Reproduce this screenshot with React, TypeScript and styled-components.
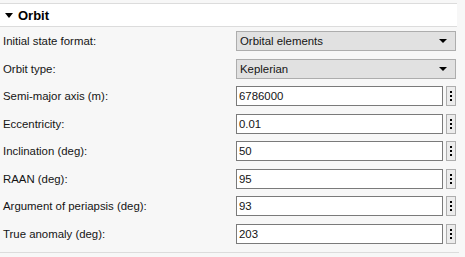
import React from "react";
import styled, { createGlobalStyle } from "styled-components";

const Global = createGlobalStyle`
  html, body { margin: 0; padding: 0; background: #f7f7f7; }
  body { font-family: "Liberation Sans", Arial, sans-serif; color: #141414; }
`;

const Page = styled.div`
  width: 457px;
  padding-top: 3px;
`;

const Header = styled.div`
  height: 22px;
  background: #ffffff;
  border-top: 1px solid #dcdcdc;
  border-bottom: 1px solid #dcdcdc;
  display: flex;
  align-items: center;
  padding-left: 5px;
  gap: 5px;
`;

const Caret = styled.span`
  width: 0;
  height: 0;
  border-left: 4px solid transparent;
  border-right: 4px solid transparent;
  border-top: 5px solid #000;
`;

const Title = styled.span`
  font-weight: bold;
  font-size: 13px;
  color: #000;
`;

const Grid = styled.div`
  display: grid;
  grid-template-columns: 233px 220px;
  grid-auto-rows: 20px;
  row-gap: 7.5px;
  padding: 4px 0 0 3px;
  align-items: center;
`;

const Label = styled.div`
  font-size: 11.4px;
`;

const Combo = styled.div`
  height: 20px;
  box-sizing: border-box;
  background: #e1e1e1;
  border: 1px solid #adadad;
  display: flex;
  align-items: center;
  justify-content: space-between;
  padding: 0 8px 0 3px;
  font-size: 11.4px;
`;

const ComboArrow = styled.span`
  width: 0;
  height: 0;
  border-left: 4px solid transparent;
  border-right: 4px solid transparent;
  border-top: 4px solid #000;
`;

const FieldRow = styled.div`
  display: flex;
  align-items: center;
  gap: 3px;
  height: 20px;
`;

const Input = styled.div`
  flex: 0 0 207px;
  height: 20px;
  box-sizing: border-box;
  background: #fff;
  border: 1px solid #7a7a7a;
  display: flex;
  align-items: center;
  padding-left: 2px;
  font-size: 11.4px;
`;

const MenuButton = styled.div`
  width: 10px;
  height: 20px;
  box-sizing: border-box;
  background: #ececec;
  border: 1px solid #adadad;
  display: flex;
  flex-direction: column;
  align-items: center;
  justify-content: center;
  gap: 2px;
`;

const Dot = styled.span`
  width: 2px;
  height: 2px;
  background: #000;
`;

const Separator = styled.div`
  margin-top: 8px;
  width: 459px;
  border-top: 1px solid #dcdcdc;
`;

const combos = [
  { label: "Initial state format:", value: "Orbital elements" },
  { label: "Orbit type:", value: "Keplerian" },
];

const fields = [
  { label: "Semi-major axis (m):", value: "6786000" },
  { label: "Eccentricity:", value: "0.01" },
  { label: "Inclination (deg):", value: "50" },
  { label: "RAAN (deg):", value: "95" },
  { label: "Argument of periapsis (deg):", value: "93" },
  { label: "True anomaly (deg):", value: "203" },
];

export default function App() {
  return (
    <Page>
      <Global />
      <Header>
        <Caret />
        <Title>Orbit</Title>
      </Header>
      <Grid>
        {combos.map((c) => (
          <React.Fragment key={c.label}>
            <Label>{c.label}</Label>
            <Combo>
              <span>{c.value}</span>
              <ComboArrow />
            </Combo>
          </React.Fragment>
        ))}
        {fields.map((f) => (
          <React.Fragment key={f.label}>
            <Label>{f.label}</Label>
            <FieldRow>
              <Input>{f.value}</Input>
              <MenuButton>
                <Dot />
                <Dot />
                <Dot />
              </MenuButton>
            </FieldRow>
          </React.Fragment>
        ))}
      </Grid>
      <Separator />
    </Page>
  );
}
